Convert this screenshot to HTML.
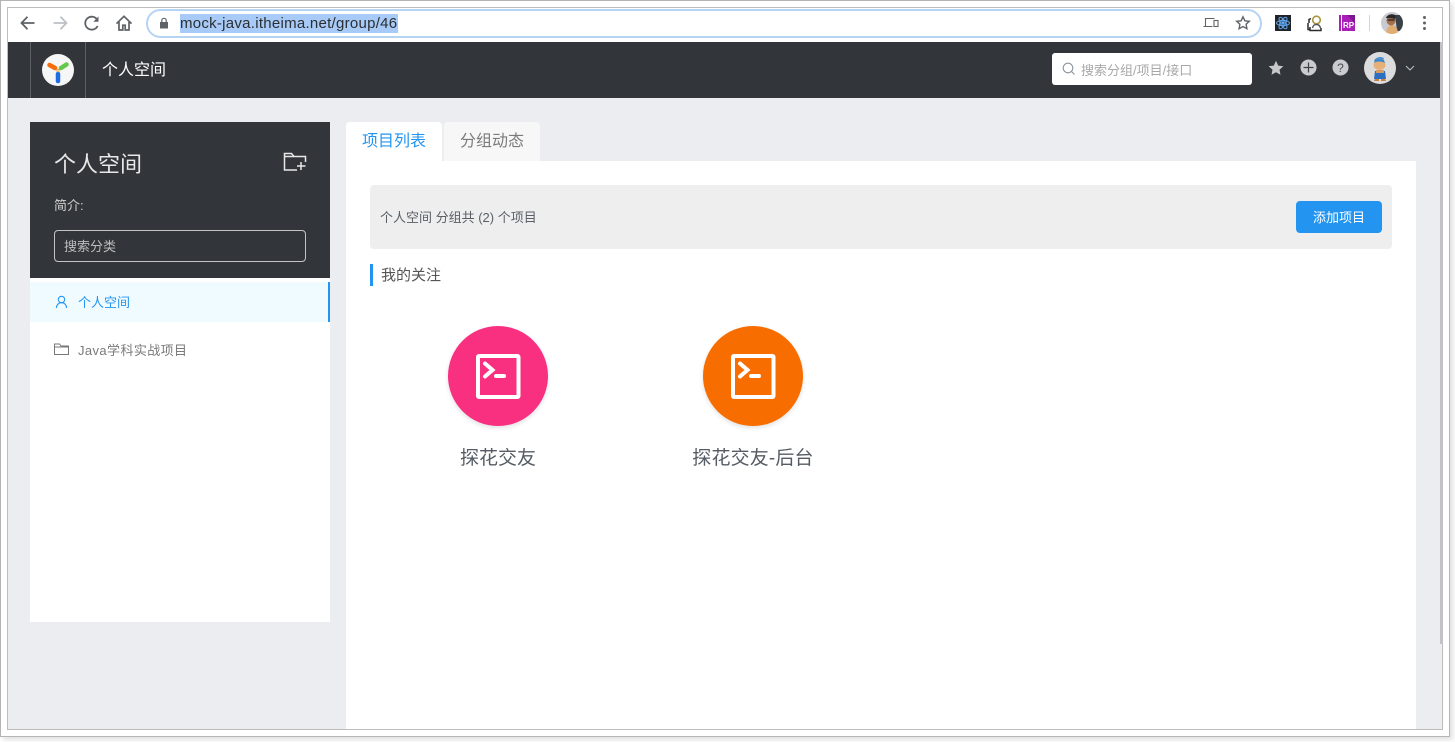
<!DOCTYPE html>
<html lang="zh-CN">
<head>
<meta charset="utf-8">
<title>个人空间</title>
<style>
html,body{margin:0;padding:0;width:1455px;height:742px;overflow:hidden;background:#fff}
body{position:relative;font-family:"Liberation Sans","Noto Sans CJK SC",sans-serif;color:#555}
.a{position:absolute;box-sizing:border-box}
.t{position:absolute;white-space:nowrap;line-height:1}
svg{position:absolute;display:block}
</style>
</head>
<body>
<!-- outer shadow and frame -->
<div class="a" style="left:0;top:0;width:1450px;height:737px;background:#fff;border:1.5px solid #b4b4b4;box-shadow:3px 3px 5px rgba(0,0,0,.12)"></div>
<!-- window -->
<div class="a" style="left:7px;top:7px;width:1436px;height:723px;background:#ebedf1;border:1px solid #bdbdbd;overflow:hidden"></div>

<!-- browser toolbar -->
<div class="a" style="left:8px;top:8px;width:1434px;height:34px;background:#fff"></div>
<svg style="left:19px;top:14px" width="18" height="18" viewBox="0 0 18 18" fill="none" stroke="#5f6368" stroke-width="1.8"><path d="M15.500 9H2.800M8.500 2.800 2.500 9l6 6.200"/></svg>
<svg style="left:51px;top:14px" width="18" height="18" viewBox="0 0 18 18" fill="none" stroke="#bdc1c6" stroke-width="1.8"><path d="M2.500 9h12.700M9.500 2.800l6 6.200-6 6.200"/></svg>
<svg style="left:83px;top:14px" width="18" height="18" viewBox="0 0 18 18" fill="none" stroke="#5f6368" stroke-width="1.8"><path d="M14.600 12a6.500 6.500 0 1 1-.3-6.200"/><path d="M15.500 2.500v5.200h-5.200" fill="#5f6368" stroke="none"/></svg>
<svg style="left:115px;top:14px" width="18" height="18" viewBox="0 0 18 18" fill="none" stroke="#5f6368" stroke-width="1.7"><path d="M1.500 9.600 9 2.300l7.500 7.300M4 8v8h3.800v-4.800h2.400V16H14V8"/></svg>
<div class="a" style="left:146px;top:9px;width:1116px;height:29px;background:#fff;border:2px solid #b5d4f4;border-radius:15px"></div>
<svg style="left:158px;top:17px" width="12" height="12" viewBox="0 0 12 12"><path d="M2 5h8v6.500H2z" fill="#5f6368"/><path d="M3.800 5V3.500a2.200 2.200 0 0 1 4.400 0V5" fill="none" stroke="#5f6368" stroke-width="1.200"/></svg>
<div class="a" style="left:180px;top:14px;width:218px;height:19px;background:#a8caf6"></div>
<div class="t" style="left:180px;top:15px;font-size:15px;line-height:17px;color:#2b2f33;letter-spacing:.27px">mock-java.itheima.net/group/46</div>
<svg style="left:1203px;top:16px" width="16" height="14" viewBox="0 0 16 14" fill="none" stroke="#5f6368" stroke-width="1.100"><path d="M2.500 10V2.500h9M.5 10.500h9"/><rect x="11" y="4.500" width="4" height="6"/></svg>
<svg style="left:1235px;top:15px" width="16" height="16" viewBox="0 0 16 16" fill="none" stroke="#5f6368" stroke-width="1.400"><path d="m8 1.800 1.900 4 4.400.5-3.200 3 .8 4.400L8 11.500l-3.900 2.200.8-4.400-3.200-3 4.400-.5z"/></svg>
<!-- extensions -->
<div class="a" style="left:1275px;top:15px;width:16px;height:16px;background:#20232a"></div>
<svg style="left:1275px;top:15px" width="16" height="16" viewBox="0 0 16 16" fill="none" stroke="#61a8ee" stroke-width="1"><ellipse cx="8" cy="8" rx="6.500" ry="2.600"/><ellipse cx="8" cy="8" rx="6.500" ry="2.600" transform="rotate(60 8 8)"/><ellipse cx="8" cy="8" rx="6.500" ry="2.600" transform="rotate(120 8 8)"/><circle cx="8" cy="8" r="1.200" fill="#61a8ee"/></svg>
<svg style="left:1307px;top:15px" width="16" height="17" viewBox="0 0 16 17" fill="none"><path d="M4 3.500 2 4.500v3.500M1 8v6.500h2M3 12v3.500h11V13" stroke="#2b2b2b" stroke-width="1.500"/><circle cx="9.500" cy="5" r="3.800" stroke="#a9973e" stroke-width="1.600"/><path d="M5.500 13c.8-3 2-3.500 4-3.500s3.300.7 4 3.500" stroke="#555" stroke-width="1.400"/></svg>
<div class="a" style="left:1339px;top:15px;width:16px;height:16px;background:#a820b8"></div>
<div class="a" style="left:1341px;top:15px;width:1px;height:16px;background:#fff"></div>
<svg style="left:1347px;top:15px" width="8" height="8"><path d="M0 0h8v8z" fill="#7d1790"/></svg>
<div class="t" style="left:1343px;top:22px;font-size:8px;color:#fff;font-weight:bold">RP</div>
<div class="a" style="left:1369px;top:15px;width:1px;height:16px;background:#d5d5d5"></div>
<svg style="left:1381px;top:12px" width="22" height="22" viewBox="0 0 22 22"><defs><clipPath id="c1"><circle cx="11" cy="11" r="11"/></clipPath></defs><g clip-path="url(#c1)"><rect width="22" height="22" fill="#c8cbd0"/><path d="M14 3h8v16h-6z" fill="#3a4048"/><path d="M5 22c0-6 3-9 6-9s6 3 6 9z" fill="#e0ad72"/><ellipse cx="10" cy="8.500" rx="4.500" ry="5" fill="#a56f4d"/><path d="M5 6c1-4 8-5 10-2l-1 3c-3-1-6-1-9-1z" fill="#292929"/><path d="M6.500 8h7" stroke="#222" stroke-width="1.300"/></g></svg>
<svg style="left:1422px;top:15px" width="5" height="16" viewBox="0 0 5 16" fill="#5f6368"><circle cx="2.500" cy="2.500" r="1.500"/><circle cx="2.500" cy="8" r="1.500"/><circle cx="2.500" cy="13.500" r="1.500"/></svg>

<!-- app header -->
<div class="a" style="left:8px;top:42px;width:1432px;height:56px;background:#32363b"></div>
<div class="a" style="left:30px;top:42px;width:1px;height:56px;background:#5d6165"></div>
<div class="a" style="left:85px;top:42px;width:1px;height:56px;background:#5d6165"></div>
<div class="a" style="left:42px;top:54px;width:32px;height:32px;border-radius:50%;background:#f6f6f6"></div>
<svg style="left:42px;top:54px" width="32" height="32" viewBox="0 0 32 32" fill="none" stroke-width="4.500" stroke-linecap="round"><path d="M16 20v7" stroke="#1d6fe0"/><path d="M13 14 7.500 11" stroke="#f76b0a"/><path d="m19 14 5.500-3.500" stroke="#62c84a"/><circle cx="16" cy="16.500" r="1.300" fill="#f3d9b0" stroke="#f0a050" stroke-width=".8"/></svg>
<div class="t" style="left:102px;top:63px;font-size:16px;color:#fff">个人空间</div>
<div class="a" style="left:1052px;top:53px;width:200px;height:32px;background:#fff;border-radius:3px"></div>
<svg style="left:1062px;top:62px" width="14" height="14" viewBox="0 0 14 14" fill="none" stroke="#8a949e" stroke-width="1.100"><circle cx="6" cy="6" r="4.800"/><path d="m9.500 9.500 3 3"/></svg>
<div class="t" style="left:1081px;top:63px;font-size:13px;line-height:15px;color:#a8a8a8">搜索分组/项目/接口</div>
<svg style="left:1268px;top:60px" width="16" height="16" viewBox="0 0 16 16"><path d="m8 .8 2.200 4.800 5.100.6-3.800 3.500 1 5.100L8 12.300l-4.500 2.500 1-5.100L.7 6.200l5.100-.6z" fill="#c6c8ca"/></svg>
<svg style="left:1300px;top:59px" width="17" height="17" viewBox="0 0 17 17"><circle cx="8.500" cy="8.500" r="8" fill="#c9cbce"/><path d="M8.500 3.500v10M3.500 8.500h10" stroke="#3e4247" stroke-width="1.200"/></svg>
<svg style="left:1332px;top:59px" width="17" height="17" viewBox="0 0 17 17"><circle cx="8.500" cy="8.500" r="8" fill="#c9cbce"/><text x="8.500" y="13" text-anchor="middle" font-size="12" font-family="Liberation Sans" fill="#4a4e53">?</text></svg>
<svg style="left:1364px;top:52px" width="32" height="32" viewBox="0 0 32 32"><circle cx="16" cy="16" r="16" fill="#dcdcdc"/><path d="M10 9c1-3 4-4 7-4l3 1-1 3z" fill="#4a8fd0"/><ellipse cx="15.500" cy="13" rx="6" ry="5" fill="#e7b078"/><path d="M10 11c2-2 8-2 11 0l-1-3H11z" fill="#3d85c8"/><path d="M11 19h10l1 8H10z" fill="#2b6fc0"/><path d="M12 18h8v3h-8z" fill="#d99a62"/><path d="M11 27h4v2h-5zM17 27h4l1 2h-5z" fill="#c77f3c"/></svg>
<svg style="left:1405px;top:65px" width="10" height="7" viewBox="0 0 10 7" fill="none" stroke="#b9bcc0" stroke-width="1.100"><path d="m1 1 4 4 4-4"/></svg>

<!-- scrollbar -->
<div class="a" style="left:1440px;top:42px;width:3px;height:602px;background:#c2c3c6"></div>

<!-- sidebar -->
<div class="a" style="left:30px;top:122px;width:300px;height:500px;background:#fff"></div>
<div class="a" style="left:30px;top:122px;width:300px;height:156px;background:#32363b"></div>
<div class="t" style="left:54px;top:154px;font-size:22px;color:#e8e8e8">个人空间</div>
<svg style="left:283px;top:152px" width="24" height="20" viewBox="0 0 24 20" fill="none" stroke="#e8e8e8" stroke-width="1.500"><path d="M14 18H1.500V1.500h7l2.500 3h11.500V10"/><path d="M1.500 4.500H11M18 10v8M14 14h8.500"/></svg>
<div class="t" style="left:54px;top:199px;font-size:13px;color:#cfcfcf">简介:</div>
<div class="a" style="left:54px;top:230px;width:252px;height:32px;border:1px solid #c4c4c4;border-radius:4px"></div>
<div class="t" style="left:64px;top:240px;font-size:13px;color:#bdbdbd">搜索分类</div>
<div class="a" style="left:30px;top:282px;width:300px;height:40px;background:#f0fbff;border-right:2px solid #2395f1"></div>
<svg style="left:55px;top:295px" width="13" height="14" viewBox="0 0 13 14" fill="none" stroke="#2395f1" stroke-width="1.100"><circle cx="6.500" cy="4.500" r="3.200"/><path d="M1.300 13c.5-3.500 2.500-5.300 5.200-5.300s4.700 1.800 5.200 5.300"/></svg>
<div class="t" style="left:78px;top:296px;font-size:13px;color:#2395f1">个人空间</div>
<svg style="left:54px;top:343px" width="15" height="12" viewBox="0 0 15 12" fill="none" stroke="#777" stroke-width="1"><path d="M.5 11.500V1h5l1.500 2h7.500v8.500zM.5 4h14"/></svg>
<div class="t" style="left:78px;top:344px;font-size:13px;color:#7a7a7a;letter-spacing:.4px">Java学科实战项目</div>

<!-- tabs -->
<div class="a" style="left:346px;top:122px;width:96px;height:40px;background:#fff;border-radius:4px 4px 0 0"></div>
<div class="t" style="left:362px;top:134px;font-size:16px;color:#2395f1">项目列表</div>
<div class="a" style="left:444px;top:122px;width:96px;height:39px;background:#f7f7f7;border-radius:4px 4px 0 0"></div>
<div class="t" style="left:460px;top:134px;font-size:16px;color:#7b7b7b">分组动态</div>

<!-- main panel -->
<div class="a" style="left:346px;top:161px;width:1070px;height:568px;background:#fff"></div>
<div class="a" style="left:370px;top:185px;width:1022px;height:64px;background:#eeeeee;border-radius:4px"></div>
<div class="t" style="left:380px;top:211px;font-size:13px;color:#5a5f66">个人空间 分组共 (2) 个项目</div>
<div class="a" style="left:1296px;top:201px;width:86px;height:32px;background:#2395f1;border-radius:4px"></div>
<div class="t" style="left:1313px;top:211px;font-size:13px;color:#fff">添加项目</div>
<div class="a" style="left:370px;top:264px;width:3px;height:22px;background:#2395f1"></div>
<div class="t" style="left:381px;top:268px;font-size:15px;color:#555">我的关注</div>

<!-- projects -->
<div class="a" style="left:448px;top:326px;width:100px;height:100px;border-radius:50%;background:#f92f80;box-shadow:0 2px 5px rgba(0,0,0,.12)"></div>
<svg style="left:475px;top:353px" width="46" height="46" viewBox="0 0 46 46" fill="none" stroke="#fff" stroke-width="4" stroke-linecap="round"><rect x="3" y="3" width="40.500" height="41" rx="1"/><path d="m10 10.500 7.500 6.500-7.500 6.500M21 23h8"/></svg>
<div class="t" style="left:398px;top:449px;width:200px;text-align:center;font-size:19px;color:#555c64">探花交友</div>
<div class="a" style="left:703px;top:326px;width:100px;height:100px;border-radius:50%;background:#f86d00;box-shadow:0 2px 5px rgba(0,0,0,.12)"></div>
<svg style="left:730px;top:353px" width="46" height="46" viewBox="0 0 46 46" fill="none" stroke="#fff" stroke-width="4" stroke-linecap="round"><rect x="3" y="3" width="40.500" height="41" rx="1"/><path d="m10 10.500 7.500 6.500-7.500 6.500M21 23h8"/></svg>
<div class="t" style="left:653px;top:449px;width:200px;text-align:center;font-size:19px;letter-spacing:.15px;color:#555c64">探花交友-后台</div>
</body>
</html>
